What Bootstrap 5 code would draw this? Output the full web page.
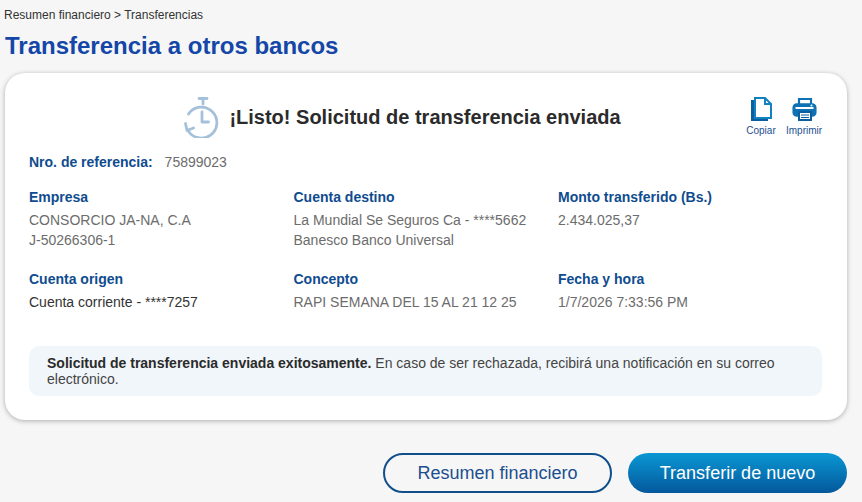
<!DOCTYPE html>
<html lang="es">
<head>
<meta charset="UTF-8">
<title>Transferencia a otros bancos</title>
<link href="https://cdn.jsdelivr.net/npm/bootstrap@5.3.2/dist/css/bootstrap.min.css" rel="stylesheet">
<style>
    html, body { height: 100%; overflow: hidden; }
    body {
        background-color: #f6f6f6;
        font-family: "Liberation Sans", Arial, sans-serif;
        color: #6c6c6c;
        font-size: 14px;
    }
    .page-wrap { padding: 8px 15px 0 5px; }
    .crumbs { font-size: 12px; line-height: 14px; color: #333; margin-left: -1px; }
    .page-title { color: #1446a8; font-size: 24px; font-weight: 700; line-height: 28px; margin: 10px 0 13px; }
    .result-card {
        background: #fff;
        border-radius: 20px;
        box-shadow: 0 1px 5px rgba(0,0,0,.3);
        height: 347px;
        padding: 22px 24px 0;
    }
    .result-head { height: 44px; }
    .result-title { color: #2b2b2b; font-size: 20px; font-weight: 700; line-height: 24px; margin: 0; }
    .head-center { margin-right: 47px; gap: 7px; }
    .tool-list { top: 2px; right: 1px; gap: 7px; }
    .tool-item { font-size: 10px; line-height: 11px; color: #1b4f8f; width: 36px; }
    .tool-item svg { display: block; margin: 0 auto 4px; }
    .ref-line { margin-top: 15px; line-height: 16px; }
    .field-label { color: #0f4c8f; font-weight: 700; line-height: 16px; }
    .ref-line .field-label { margin-right: 8px; }
    .info-grid { margin-top: 19px; row-gap: 15px; }
    .info-cell { width: 264.5px; }
    .field-value { line-height: 20px; margin-top: 5px; min-height: 46px; }
    .dark-value { color: #333; }
    .note-box {
        background: #f1f6fa;
        border-radius: 10px;
        margin-top: 8px;
        padding: 9px 18px;
        line-height: 16px;
        width: 793px;
        color: #444;
    }
    .note-box strong { color: #2b2b2b; }
    .btn-row { margin-top: 33px; gap: 16px; }
    .pill-btn {
        width: 229px;
        height: 40px;
        border-radius: 20px;
        font-size: 18px;
        line-height: 36px;
        padding: 0;
    }
    .pill-outline { border: 2px solid #114f8b; color: #1b4f8f; background: transparent; }
    .pill-solid {
        width: 219px;
        border: 0;
        line-height: 40px;
        color: #fff;
        background: linear-gradient(#0a97d3, #04589c);
    }
</style>
</head>
<body>
<div class="page-wrap">
    <div class="crumbs">Resumen financiero &gt; Transferencias</div>
    <h1 class="page-title">Transferencia a otros bancos</h1>

    <div class="result-card">
        <div class="result-head position-relative d-flex justify-content-center align-items-center">
            <div class="head-center d-flex align-items-center">
                <svg width="38" height="42" viewBox="0 0 38 42" fill="none" stroke="#a5c0da" stroke-width="2.800" stroke-linecap="round" stroke-linejoin="round">
                    <path d="M15 2.500h8M19 3v5"/>
                    <path d="M4.500 18A15.500 15.500 0 1 1 3.500 33.500"/>
                    <path d="M1.500 27.500l1.500 7 6.500-2.500"/>
                    <path d="M18 16v10h6.500"/>
                </svg>
                <h2 class="result-title">¡Listo! Solicitud de transferencia enviada</h2>
            </div>
            <div class="tool-list position-absolute d-flex text-center">
                <div class="tool-item">
                    <svg width="22" height="24" viewBox="0 0 22 24">
                        <path fill="#0b5f9f" d="M1 3h3v18h14v3H1z"/>
                        <path fill="#fff" stroke="#1281c2" stroke-width="2" d="M5 1h10l6 6v14H5z"/>
                        <path fill="#1281c2" d="M14 1h2v5h5v2h-7z"/>
                    </svg>
                    <div>Copiar</div>
                </div>
                <div class="tool-item">
                    <svg width="25" height="24" viewBox="0 0 25 24">
                        <path fill="none" stroke="#0f72b5" stroke-width="2.200" d="M7 7V2h12v5"/>
                        <rect x="1.200" y="7" width="22.600" height="12" rx="3.500" fill="#0f72b5" stroke="#0f72b5" stroke-width="1.500"/>
                        <rect x="3.500" y="10" width="18" height="2" fill="#fff"/>
                        <rect x="7" y="15" width="12" height="8" fill="#fff" stroke="#0b5f9f" stroke-width="2"/>
                        <path stroke="#0b5f9f" d="M9 18h8M9 20.500h8"/>
                        <circle cx="19.500" cy="8.500" r="1" fill="#fff"/>
                    </svg>
                    <div>Imprimir</div>
                </div>
            </div>
        </div>

        <div class="ref-line"><span class="field-label">Nro. de referencia:</span> 75899023</div>

        <div class="info-grid d-flex flex-wrap">
            <div class="info-cell"><div class="field-label">Empresa</div><div class="field-value">CONSORCIO JA-NA, C.A<br>J-50266306-1</div></div>
            <div class="info-cell"><div class="field-label">Cuenta destino</div><div class="field-value">La Mundial Se Seguros Ca - ****5662<br>Banesco Banco Universal</div></div>
            <div class="info-cell"><div class="field-label">Monto transferido (Bs.)</div><div class="field-value">2.434.025,37</div></div>
            <div class="info-cell"><div class="field-label">Cuenta origen</div><div class="field-value dark-value">Cuenta corriente - ****7257</div></div>
            <div class="info-cell"><div class="field-label">Concepto</div><div class="field-value">RAPI SEMANA DEL 15 AL 21 12 25</div></div>
            <div class="info-cell"><div class="field-label">Fecha y hora</div><div class="field-value">1/7/2026 7:33:56 PM</div></div>
        </div>

        <div class="note-box"><strong>Solicitud de transferencia enviada exitosamente.</strong> En caso de ser rechazada, recibirá una notificación en su correo electrónico.</div>
    </div>

    <div class="btn-row d-flex justify-content-end">
        <button class="btn pill-btn pill-outline">Resumen financiero</button>
        <button class="btn pill-btn pill-solid">Transferir de nuevo</button>
    </div>
</div>
<script src="https://cdn.jsdelivr.net/npm/bootstrap@5.3.2/dist/js/bootstrap.bundle.min.js"></script>
</body>
</html>
